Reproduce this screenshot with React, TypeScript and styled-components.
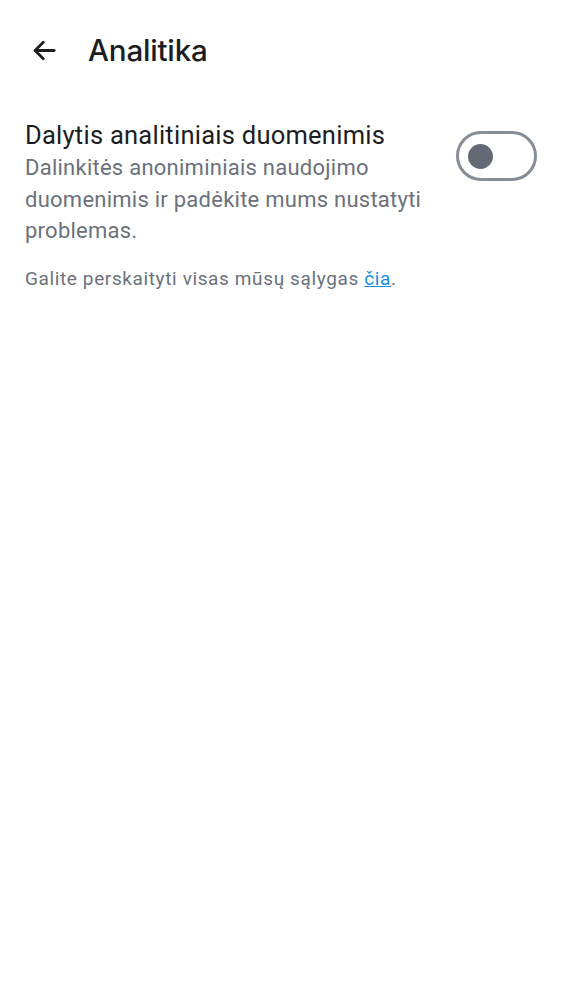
import React from "react";
import styled, { createGlobalStyle } from "styled-components";

const Global = createGlobalStyle`
  html, body { margin: 0; padding: 0; background: #ffffff; }
  body { font-family: Roboto, "Noto Sans", sans-serif; -webkit-font-smoothing: antialiased; }
`;

const Page = styled.div`
  width: 562px;
  min-height: 1000px;
  background: #ffffff;
  display: flex;
  flex-direction: column;
`;

const TopBar = styled.header`
  height: 100px;
  display: flex;
  align-items: center;
  padding: 0 0 0 29px;
  box-sizing: border-box;
`;

const BackButton = styled.button`
  width: 30px;
  height: 30px;
  padding: 0;
  border: none;
  background: none;
  display: flex;
  align-items: center;
  justify-content: center;
  color: #1c1d22;
  margin-right: 29px;
`;

const Title = styled.h1`
  margin: 0;
  font-family: Inter, Roboto, sans-serif;
  font-size: 29.6px;
  font-weight: 500;
  color: #1c1d22;
  letter-spacing: -0.2px;
`;

const Section = styled.section`
  padding: 18px 25px 0 25px;
  display: flex;
  flex-direction: column;
`;

const SettingRow = styled.div`
  display: flex;
  align-items: flex-start;
  justify-content: space-between;
`;

const SettingText = styled.div`
  display: flex;
  flex-direction: column;
  max-width: 410px;
`;

const SettingTitle = styled.div`
  font-size: 25.5px;
  line-height: 34px;
  color: #1c1d22;
  letter-spacing: 0.25px;
`;

const SettingDesc = styled.div`
  font-size: 22px;
  line-height: 31.5px;
  color: #6b717b;
  letter-spacing: 0.25px;
`;

const Toggle = styled.button`
  margin-top: 13px;
  width: 81px;
  height: 50px;
  box-sizing: border-box;
  border-radius: 25px;
  border: 3px solid #878d96;
  background: #ffffff;
  padding: 0 0 0 9px;
  display: flex;
  align-items: center;
  flex-shrink: 0;
`;

const Knob = styled.span`
  width: 25px;
  height: 25px;
  border-radius: 50%;
  background: #636a74;
`;

const Footnote = styled.p`
  margin: 19px 0 0 0;
  font-size: 19px;
  line-height: 26px;
  color: #6b717b;
  letter-spacing: 0.62px;
`;

const Link = styled.a`
  color: #1a8be0;
  text-decoration: underline;
`;

export default function App() {
  return (
    <Page>
      <Global />
      <TopBar>
        <BackButton aria-label="Atgal">
          <svg width="29" height="29" viewBox="0 0 24 24" fill="none" stroke="currentColor" strokeWidth="2.3" strokeLinecap="round" strokeLinejoin="round">
            <path d="M20 12H4.5" />
            <path d="M11 5.2L4.2 12L11 18.8" />
          </svg>
        </BackButton>
        <Title>Analitika</Title>
      </TopBar>
      <Section>
        <SettingRow>
          <SettingText>
            <SettingTitle>Dalytis analitiniais duomenimis</SettingTitle>
            <SettingDesc>
              Dalinkitės anoniminiais naudojimo duomenimis ir padėkite mums nustatyti problemas.
            </SettingDesc>
          </SettingText>
          <Toggle aria-label="Dalytis analitiniais duomenimis">
            <Knob />
          </Toggle>
        </SettingRow>
        <Footnote>
          Galite perskaityti visas mūsų sąlygas <Link href="#">čia</Link>.
        </Footnote>
      </Section>
    </Page>
  );
}
